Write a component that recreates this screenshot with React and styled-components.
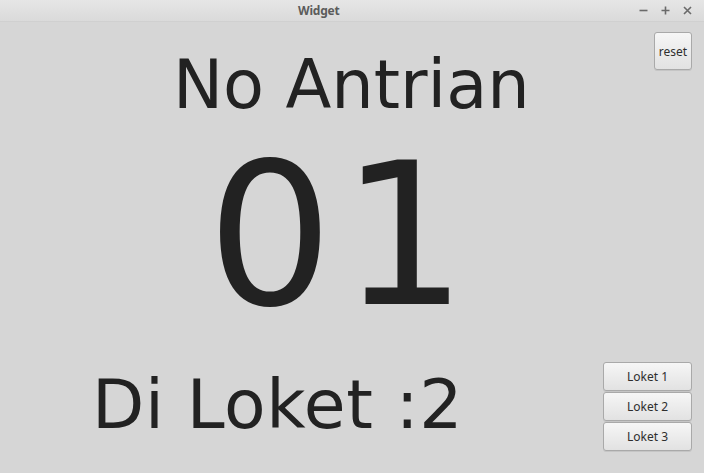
import React from 'react';
import styled, { createGlobalStyle } from 'styled-components';

const GlobalStyle = createGlobalStyle`
  html, body {
    margin: 0;
    padding: 0;
    background: #d6d6d6;
  }
`;

// Window frame
const Window = styled.div`
  width: 704px;
  height: 473px;
  display: flex;
  flex-direction: column;
  background: #d6d6d6;
  overflow: hidden;
`;

const TitleBar = styled.div`
  height: 22px;
  flex: none;
  display: flex;
  align-items: center;
  background: linear-gradient(#e6e6e6, #dadada);
  border-bottom: 1px solid #d0d0d0;
  box-sizing: border-box;
`;

const Title = styled.div`
  margin-left: 298px;
  font-family: "Noto Sans", "Open Sans", sans-serif;
  font-weight: 700;
  font-size: 12px;
  color: #5b5b5b;
  letter-spacing: -0.2px;
`;

const Controls = styled.div`
  margin-left: auto;
  display: flex;
  gap: 13px;
  padding-right: 12px;
  align-items: center;
`;

const Body = styled.div`
  flex: 1;
  display: grid;
  grid-template-columns: 1fr auto;
`;

const Main = styled.div`
  display: flex;
  flex-direction: column;
  align-items: flex-start;
`;

const Label = styled.div`
  font-family: "DejaVu Sans", sans-serif;
  color: #222222;
  font-size: ${(p) => p.$size}px;
  letter-spacing: ${(p) => p.$spacing || 0}px;
  line-height: 1;
  margin-top: ${(p) => p.$top}px;
  margin-left: ${(p) => p.$left}px;
  white-space: pre;
`;

const Side = styled.div`
  display: flex;
  flex-direction: column;
  justify-content: space-between;
  align-items: flex-end;
  padding: 10px 12px 22px 0;
`;

const ButtonGroup = styled.div`
  display: flex;
  flex-direction: column;
  gap: 1px;
`;

const Button = styled.button`
  box-sizing: border-box;
  width: ${(p) => p.$w}px;
  height: ${(p) => p.$h}px;
  padding: 0;
  border: 1px solid #a9a9a9;
  border-radius: 3px;
  background: linear-gradient(#f6f6f6, #e2e2e2);
  box-shadow: 0 1px 0 rgba(0, 0, 0, 0.08);
  font-family: "Noto Sans", "Open Sans", sans-serif;
  font-size: 12px;
  color: #2e2e2e;
`;

const Glyph = ({ type }) => (
  <svg width="9" height="9" viewBox="0 0 9 9">
    {type === 'min' && <path d="M0.5 4.5h8" stroke="#6a6a6a" strokeWidth="1.6" />}
    {type === 'max' && <path d="M0.5 4.5h8M4.5 0.5v8" stroke="#6a6a6a" strokeWidth="1.6" />}
    {type === 'close' && <path d="M1 1l7 7M8 1l-7 7" stroke="#6a6a6a" strokeWidth="1.6" />}
  </svg>
);

const App = () => (
  <>
    <GlobalStyle />
    <Window>
      <TitleBar>
        <Title>Widget</Title>
        <Controls>
          <Glyph type="min" />
          <Glyph type="max" />
          <Glyph type="close" />
        </Controls>
      </TitleBar>
      <Body>
        <Main>
          <Label $size={67} $top={30} $left={173}>No Antrian</Label>
          <Label $size={198} $top={18} $left={207} $spacing={8}>01</Label>
          <Label $size={68} $top={36} $left={92} $spacing={0.6}>Di Loket :2</Label>
        </Main>
        <Side>
          <Button $w={38} $h={38}>reset</Button>
          <ButtonGroup>
            <Button $w={89} $h={29}>Loket 1</Button>
            <Button $w={89} $h={29}>Loket 2</Button>
            <Button $w={89} $h={29}>Loket 3</Button>
          </ButtonGroup>
        </Side>
      </Body>
    </Window>
  </>
);

export default App;
